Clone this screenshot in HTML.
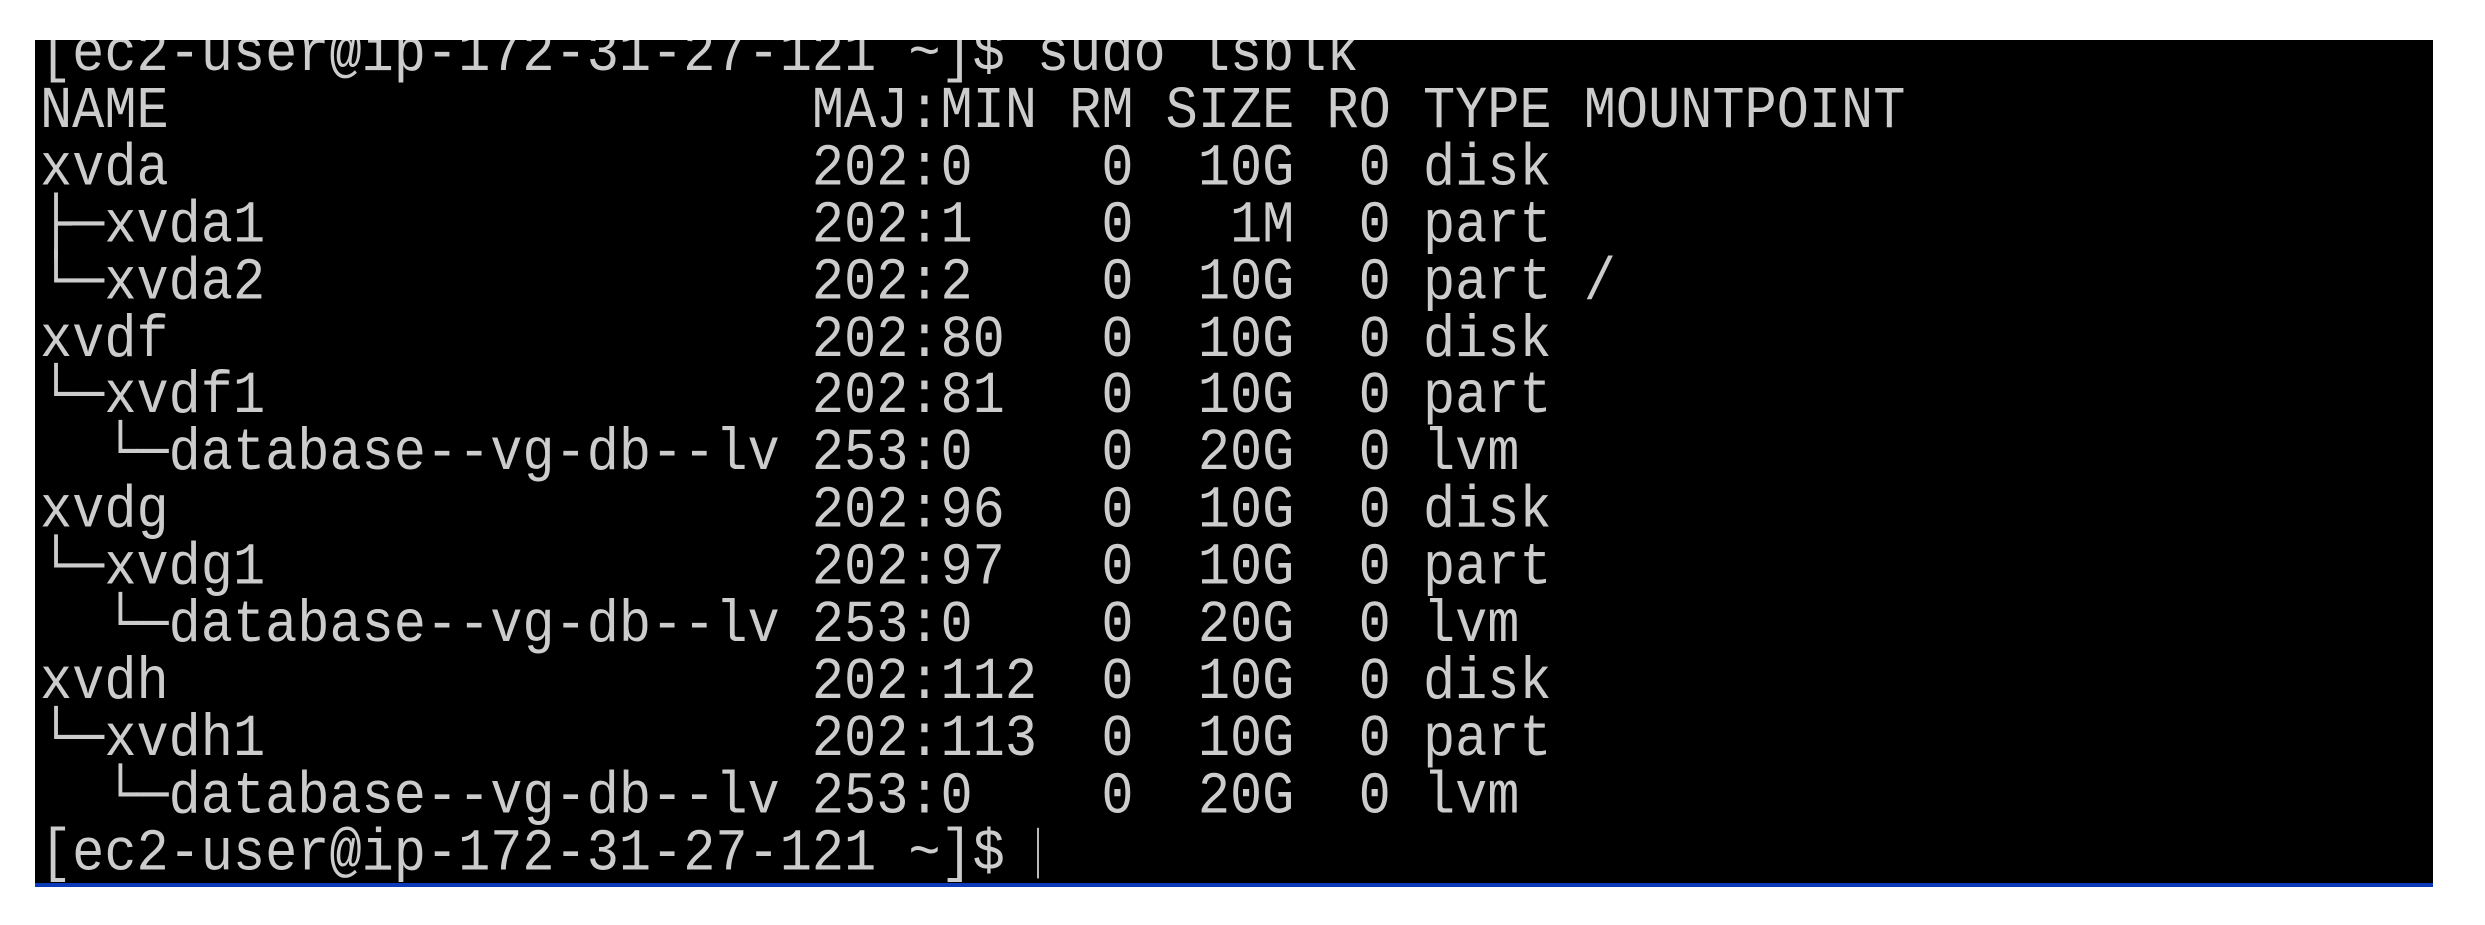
<!DOCTYPE html>
<html><head><style>
html,body{margin:0;padding:0;background:#fff;width:2485px;height:925px;overflow:hidden}
#t{position:absolute;left:35px;top:40px;width:2398px;height:843px;background:#000;border-bottom:4px solid #0a3ab8;overflow:hidden}
pre{position:absolute;left:5px;top:-13px;margin:0;font-family:"Liberation Mono","DejaVu Sans Mono",monospace;font-size:53.6px;letter-spacing:0;line-height:51.9px;color:#cccccc;transform:scaleY(1.1);transform-origin:0 0}
.cur{display:inline-block;width:2px;height:46px;background:#bbb;vertical-align:-8px}
</style></head><body>
<div id="t"><pre>[ec2-user@ip-172-31-27-121 ~]$ sudo lsblk
NAME                    MAJ:MIN RM SIZE RO TYPE MOUNTPOINT
xvda                    202:0    0  10G  0 disk
├─xvda1                 202:1    0   1M  0 part
└─xvda2                 202:2    0  10G  0 part /
xvdf                    202:80   0  10G  0 disk
└─xvdf1                 202:81   0  10G  0 part
  └─database--vg-db--lv 253:0    0  20G  0 lvm
xvdg                    202:96   0  10G  0 disk
└─xvdg1                 202:97   0  10G  0 part
  └─database--vg-db--lv 253:0    0  20G  0 lvm
xvdh                    202:112  0  10G  0 disk
└─xvdh1                 202:113  0  10G  0 part
  └─database--vg-db--lv 253:0    0  20G  0 lvm
[ec2-user@ip-172-31-27-121 ~]$ <span class="cur"></span></pre></div>
</body></html>
